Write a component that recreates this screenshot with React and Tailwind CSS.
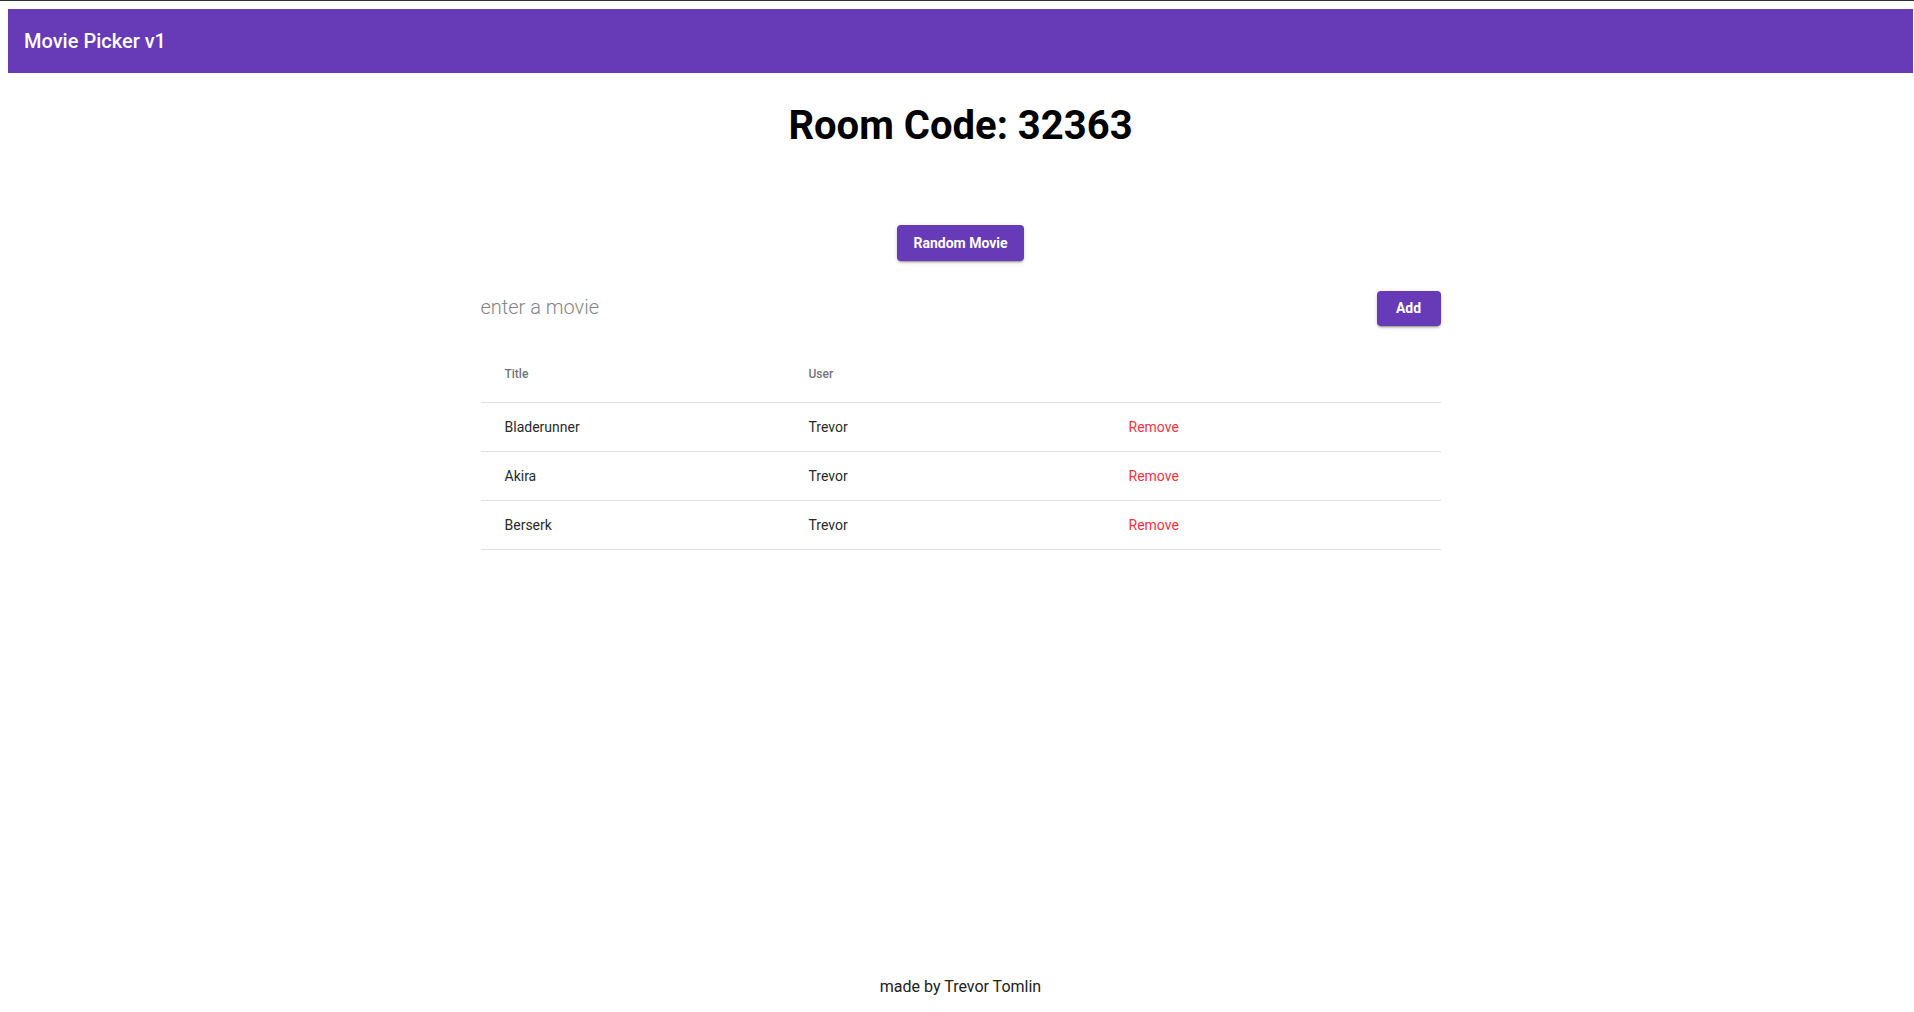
import React, { useState } from 'react'

const initialMovies = [
  { id: 1, title: 'Bladerunner', user: 'Trevor' },
  { id: 2, title: 'Akira', user: 'Trevor' },
  { id: 3, title: 'Berserk', user: 'Trevor' }
]

export default function App() {
  const [movies, setMovies] = useState(initialMovies)
  const [text, setText] = useState('')

  const addMovie = () => {
    if (!text.trim()) return
    setMovies([...movies, { id: Date.now(), title: text.trim(), user: 'Trevor' }])
    setText('')
  }

  const removeMovie = (id) => setMovies(movies.filter(m => m.id !== id))

  return (
    <div className="min-h-screen flex flex-col bg-white font-['Roboto',sans-serif]">
      <div className="h-px bg-[#2b2f37]" />

      <div className="flex-1 flex flex-col ml-2 mr-[1px]">
        {/* App bar */}
        <header className="mt-2 h-16 bg-[#673ab7] px-4 flex items-center">
          <h6 className="text-white text-[20px] font-medium leading-8">Movie Picker v1</h6>
        </header>

        <h1 className="mt-[29px] text-center text-[40px] leading-[48px] font-bold text-black">
          Room Code: 32363
        </h1>

        <div className="mt-[75px] flex justify-center">
          <button className="h-9 px-4 rounded bg-[#673ab7] text-white text-[14px] font-bold shadow-[0_3px_1px_-2px_rgba(0,0,0,0.2),0_2px_2px_0_rgba(0,0,0,0.14),0_1px_5px_0_rgba(0,0,0,0.12)]">
            Random Movie
          </button>
        </div>

        <div className="w-[960px] mx-auto mt-[29px]">
          {/* Input row */}
          <div className="flex items-center h-9">
            <input
              value={text}
              onChange={(e) => setText(e.target.value)}
              placeholder="enter a movie"
              className="flex-1 outline-none text-[20px] font-light text-[#212121] placeholder:text-[#858585] mt-[-3px]"
            />
            <button
              onClick={addMovie}
              className="h-[35px] w-[64px] rounded bg-[#673ab7] text-white text-[14px] font-bold shadow-[0_3px_1px_-2px_rgba(0,0,0,0.2),0_2px_2px_0_rgba(0,0,0,0.14),0_1px_5px_0_rgba(0,0,0,0.12)]"
            >
              Add
            </button>
          </div>

          {/* Table */}
          <div className="mt-5">
            <div className="flex items-center h-[57px] border-b border-[#e0e0e0] text-[12px] font-medium text-[#757575]">
              <div className="w-[304px] pl-6">Title</div>
              <div className="w-[320px] pl-6">User</div>
              <div className="flex-1" />
            </div>
            {movies.map(movie => (
              <div key={movie.id} className="flex items-center h-[49px] border-b border-[#e0e0e0] text-[14px] text-[#2a2a2a]">
                <div className="w-[304px] pl-6">{movie.title}</div>
                <div className="w-[320px] pl-6">{movie.user}</div>
                <div className="flex-1 pl-6">
                  <button onClick={() => removeMovie(movie.id)} className="text-[#f4343f] text-[14px]">
                    Remove
                  </button>
                </div>
              </div>
            ))}
          </div>
        </div>

        <footer className="mt-auto pb-[13px] text-center text-[16px] leading-6 text-[#212121]">
          made by Trevor Tomlin
        </footer>
      </div>
    </div>
  )
}
